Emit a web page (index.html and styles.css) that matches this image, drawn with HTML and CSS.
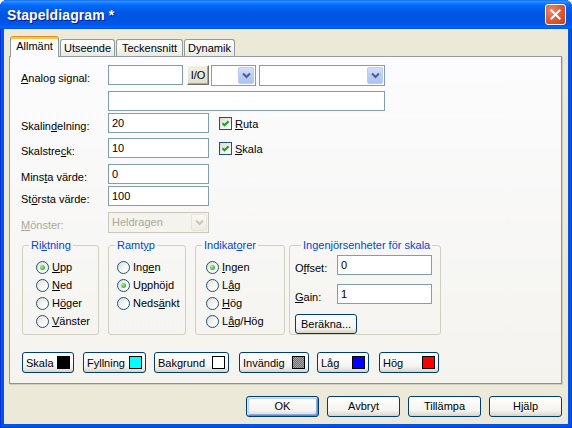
FILE: index.html
```html
<!DOCTYPE html>
<html lang="sv">
<head>
<meta charset="utf-8">
<title>Stapeldiagram</title>
<link rel="stylesheet" href="styles.css">
</head>
<body>
<div class="window">
  <header class="titlebar">
    <span class="title">Stapeldiagram *</span>
    <span class="close"><svg width="11" height="11" viewBox="0 0 11 11"><path d="M1.5 1.5L9.5 9.5M9.5 1.5L1.5 9.5" stroke="#fff" stroke-width="2" stroke-linecap="square"/></svg></span>
  </header>
  <div class="client">
    <div class="tabs">
      <span class="tab active t-allm">Allmänt</span>
      <span class="tab t-uts">Utseende</span>
      <span class="tab t-teck">Teckensnitt</span>
      <span class="tab t-dyn">Dynamik</span>
    </div>
    <div class="panel">
      <div class="form">
        <span class="lbl"><u>A</u>nalog signal:</span>
        <div class="fields">
          <span class="edit w-sig"></span>
          <span class="iobtn">I/O</span>
          <span class="combo w-c1"><span class="txt"></span><span class="drop"><svg width="9" height="7" viewBox="0 0 9 7"><path d="M1 1.5L4.5 5L8 1.5" fill="none" stroke="#4D6185" stroke-width="2"/></svg></span></span>
          <span class="combo w-c2"><span class="txt"></span><span class="drop"><svg width="9" height="7" viewBox="0 0 9 7"><path d="M1 1.5L4.5 5L8 1.5" fill="none" stroke="#4D6185" stroke-width="2"/></svg></span></span>
        </div>
        <span class="lbl"></span>
        <div class="fields"><span class="edit w-long"></span></div>
        <span class="lbl">Skalin<u>d</u>elning:</span>
        <div class="fields">
          <span class="edit w-num">20</span>
          <span class="chk"><span class="box"><svg width="9" height="9" viewBox="0 0 9 9"><path d="M1.5 4.2L3.6 6.3L7.6 2.3" fill="none" stroke="#21A121" stroke-width="2"/></svg></span><span><u>R</u>uta</span></span>
        </div>
        <span class="lbl">Skalstre<u>c</u>k:</span>
        <div class="fields">
          <span class="edit w-num">10</span>
          <span class="chk"><span class="box"><svg width="9" height="9" viewBox="0 0 9 9"><path d="M1.5 4.2L3.6 6.3L7.6 2.3" fill="none" stroke="#21A121" stroke-width="2"/></svg></span><span><u>S</u>kala</span></span>
        </div>
        <span class="lbl">Mins<u>t</u>a värde:</span>
        <div class="fields"><span class="edit w-num">0</span></div>
        <span class="lbl">St<u>ö</u>rsta värde:</span>
        <div class="fields"><span class="edit w-num">100</span></div>
        <span class="lbl disabled"><u>M</u>önster:</span>
        <div class="fields">
          <span class="combo w-num disabled"><span class="txt">Heldragen</span><span class="drop"><svg width="9" height="7" viewBox="0 0 9 7"><path d="M1 1.5L4.5 5L8 1.5" fill="none" stroke="#C9C7BA" stroke-width="2"/></svg></span></span>
        </div>
      </div>

      <div class="groups">
        <fieldset class="grp g-dir">
          <legend>Ri<u>k</u>tning</legend>
          <div class="opts">
            <div class="radio"><span class="dot on"></span><span><u>U</u>pp</span></div>
            <div class="radio"><span class="dot"></span><span><u>N</u>ed</span></div>
            <div class="radio"><span class="dot"></span><span>H<u>ö</u>ger</span></div>
            <div class="radio"><span class="dot"></span><span><u>V</u>änster</span></div>
          </div>
        </fieldset>
        <fieldset class="grp g-frame">
          <legend>Ramt<u>y</u>p</legend>
          <div class="opts">
            <div class="radio"><span class="dot"></span><span>Ing<u>e</u>n</span></div>
            <div class="radio"><span class="dot on"></span><span>U<u>p</u>phöjd</span></div>
            <div class="radio"><span class="dot"></span><span>Neds<u>ä</u>nkt</span></div>
          </div>
        </fieldset>
        <fieldset class="grp g-ind">
          <legend>Indikat<u>o</u>rer</legend>
          <div class="opts">
            <div class="radio"><span class="dot on"></span><span><u>I</u>ngen</span></div>
            <div class="radio"><span class="dot"></span><span>L<u>å</u>g</span></div>
            <div class="radio"><span class="dot"></span><span><u>H</u>ög</span></div>
            <div class="radio"><span class="dot"></span><span>L<u>å</u>g/Hög</span></div>
          </div>
        </fieldset>
        <fieldset class="grp g-eng">
          <legend>Ingenjörsenheter för skala</legend>
          <div class="eng">
            <span class="elbl">O<u>f</u>fset:</span><span class="edit w-eng">0</span>
            <span class="elbl"><u>G</u>ain:</span><span class="edit w-eng">1</span>
          </div>
          <span class="btn calc">Beräkna...</span>
        </fieldset>
      </div>

      <div class="colors">
        <span class="cbtn c-skala">Skala<span class="sw sw-black"></span></span>
        <span class="cbtn c-fyll">Fyllning<span class="sw sw-cyan"></span></span>
        <span class="cbtn c-bak">Bakgrund<span class="sw sw-white"></span></span>
        <span class="cbtn c-inv">Invändig<span class="sw sw-gray"></span></span>
        <span class="cbtn c-lag">Låg<span class="sw sw-blue"></span></span>
        <span class="cbtn c-hog">Hög<span class="sw sw-red"></span></span>
      </div>
    </div>

    <div class="actions">
      <span class="btn act default">OK</span>
      <span class="btn act">Avbryt</span>
      <span class="btn act">Tillämpa</span>
      <span class="btn act">Hjälp</span>
    </div>
  </div>
</div>
</body>
</html>
```

FILE: styles.css
```css
* { box-sizing: border-box; }
html, body { margin: 0; padding: 0; }
body {
  width: 572px;
  height: 428px;
  overflow: hidden;
  background: #ffffff;
  font-family: "Liberation Sans", Arial, sans-serif;
  font-size: 11px;
  color: #000;
}
u { text-decoration: underline; text-underline-offset: 1px; }

.window {
  width: 572px;
  height: 428px;
  display: flex;
  flex-direction: column;
  background: #0055E5;
  border-radius: 7px 7px 0 0;
  box-shadow: inset 1px 0 #0831D9, inset -1px 0 #0831D9, inset 0 -1px #0831D9;
  overflow: hidden;
}

.titlebar {
  height: 29px;
  flex: none;
  display: flex;
  align-items: center;
  padding: 0 6px 0 7px;
  background: linear-gradient(to bottom, #0058EE 0px, #3A93FF 1px, #288EFF 2px, #127DFF 3px, #0369FC 5px, #0262EE 8px, #0057E5 13px, #0054E3 20px, #0055EB 24px, #005BF5 26px, #026AFE 27px, #0062EF 28px, #0043CF 29px);
}
.title {
  flex: 1;
  color: #fff;
  font-weight: bold;
  font-size: 14px;
  letter-spacing: 0.1px;
  text-shadow: 1px 1px #0A1883;
  padding-top: 1px;
}
.close {
  width: 21px;
  height: 21px;
  border: 1px solid #fff;
  border-radius: 3px;
  background: radial-gradient(circle at 30% 30%, #F08A6C 0%, #E25D3B 45%, #C8401E 100%);
  display: flex;
  align-items: center;
  justify-content: center;
}

.client {
  flex: 1;
  margin: 0 4px 4px;
  background: #ECE9D8;
  padding: 7px 6px 0 5px;
  display: flex;
  flex-direction: column;
}

/* tabs */
.tabs {
  display: flex;
  align-items: flex-end;
  height: 20px;
  margin-left: 1px;
}
.tab {
  height: 17px;
  line-height: 16px;
  text-align: center;
  border: 1px solid #919B9C;
  border-bottom: none;
  border-radius: 3px 3px 0 0;
  background: linear-gradient(#FFFFFF, #F6F6F3 50%, #E9E8E1);
  margin-right: 1px;
}
.tab.active {
  position: relative;
  z-index: 1;
  height: 21px;
  line-height: 19px;
  margin-bottom: -1px;
  border-top: 1px solid #E68B2C;
  box-shadow: inset 0 2px #FFC83C;
  background: #FCFCFE;
}
.t-allm { width: 49px; }
.t-uts { width: 55px; }
.t-teck { width: 67px; }
.t-dyn { width: 51px; }

.panel {
  width: 553px;
  height: 328px;
  border: 1px solid #919B9C;
  border-right-color: #8C9394;
  border-bottom-color: #8C9394;
  background: linear-gradient(#FCFCFE, #F4F3EE);
  padding-top: 8px;
  box-shadow: 1px 1px 0 #D0CEBF;
}

/* form grid */
.form {
  display: grid;
  grid-template-columns: 87px auto;
  grid-template-rows: 26px 22px 25px 26px 22px 26px 20px;
  margin-left: 11px;
}
.lbl {
  line-height: 20px;
  padding-top: 3px;
  white-space: nowrap;
}
.lbl.disabled { color: #ACA899; }
.fields {
  display: flex;
  align-items: flex-start;
}
.edit {
  display: block;
  height: 20px;
  border: 1px solid #7F9DB9;
  background: #fff;
  padding: 0 3px;
  line-height: 18px;
}
.w-sig { width: 75px; }
.w-long { width: 277px; }
.w-num { width: 101px; }
.w-eng { width: 95px; }

.iobtn {
  width: 22px;
  height: 20px;
  margin-left: 4px;
  line-height: 18px;
  text-align: center;
  background: linear-gradient(#F2EFE4, #E3DECB);
  border: 1px solid;
  border-color: #FFFFFF #716F64 #716F64 #FFFFFF;
  box-shadow: 0 0 0 0 transparent, inset -1px -1px #ACA899;
}
.combo {
  display: flex;
  height: 21px;
  border: 1px solid #7F9DB9;
  background: #fff;
  padding: 1px;
}
.combo .txt {
  flex: 1;
  padding-left: 2px;
  line-height: 17px;
}
.w-c1 { width: 45px; margin-left: 2px; }
.w-c2 { width: 126px; margin-left: 3px; }
.drop {
  width: 16px;
  height: 17px;
  border: 1px solid #B9CCF6;
  border-radius: 2px;
  background: linear-gradient(#D3E0FD, #B7CAF6 60%, #AEC3F4);
  display: flex;
  align-items: center;
  justify-content: center;
}
.combo.disabled {
  border-color: #C9C7BA;
  background: #F4F3EE;
  color: #ACA899;
}
.combo.disabled .drop {
  border-color: #E8E6DA;
  background: linear-gradient(#F8F7F3, #EEEDE5);
}

.chk {
  display: flex;
  align-items: center;
  gap: 3px;
  height: 20px;
  margin-left: 10px;
  padding-top: 1px;
}
.box {
  width: 13px;
  height: 13px;
  border: 1px solid #1C5180;
  background: linear-gradient(135deg, #DCDCD7, #FFFFFF);
  display: flex;
  align-items: center;
  justify-content: center;
}

/* groups */
.groups {
  display: flex;
  margin: 7px 0 0 12px;
}
.grp {
  margin: 0;
  padding: 0;
  height: 96px;
  min-width: 0;
  border: 1px solid #D0D0BF;
  border-radius: 3px;
}
.grp legend {
  margin-left: 6px;
  padding: 0 2px;
  line-height: 13px;
  color: #0046D5;
  white-space: nowrap;
}
.g-dir { width: 77px; }
.g-frame { width: 78px; margin-left: 9px; }
.g-ind { width: 90px; margin-left: 9px; }
.g-eng { width: 152px; margin-left: 4px; padding: 3px 0 0 5px; }

.opts { padding-top: 6px; }
.g-dir .opts { padding-left: 13px; }
.g-frame .opts { padding-left: 8px; }
.g-ind .opts { padding-left: 10px; }
.radio {
  display: flex;
  align-items: center;
  gap: 3px;
  height: 18px;
}
.dot {
  width: 13px;
  height: 13px;
  border-radius: 50%;
  border: 1px solid #1C5180;
  background: linear-gradient(135deg, #DCDCD7, #FFFFFF 75%);
  display: flex;
  align-items: center;
  justify-content: center;
}
.dot.on::after {
  content: "";
  width: 5px;
  height: 5px;
  border-radius: 50%;
  background: radial-gradient(circle at 35% 35%, #A8EB9A, #4BC13F 60%, #21A121);
}

.eng {
  display: grid;
  grid-template-columns: 42px 95px;
  row-gap: 6px;
}
.elbl {
  line-height: 20px;
  padding-top: 3px;
}

.btn {
  display: block;
  border: 1px solid #003C74;
  border-radius: 3px;
  background: linear-gradient(#FFFFFF, #F5F4F0 70%, #E3E0D6 90%, #D6D0C5);
  text-align: center;
}
.calc {
  width: 62px;
  height: 20px;
  line-height: 18px;
  margin-top: 7px;
}

/* colour buttons */
.colors {
  display: flex;
  margin: 17px 0 0 12px;
}
.cbtn {
  display: flex;
  align-items: center;
  justify-content: space-between;
  height: 21px;
  padding: 0 3px 0 3px;
  border: 1px solid #003C74;
  border-radius: 3px;
  background: linear-gradient(#FFFFFF, #F5F4F0 70%, #E3E0D6 90%, #D6D0C5);
}
.c-skala { width: 52px; }
.c-fyll { width: 63px; margin-left: 9px; }
.c-bak { width: 75px; margin-left: 8px; }
.c-inv { width: 70px; margin-left: 10px; }
.c-lag { width: 52px; margin-left: 8px; }
.c-hog { width: 60px; margin-left: 10px; }
.sw {
  width: 13px;
  height: 13px;
  border: 1px solid #000;
}
.sw-black { background: #000; }
.sw-cyan { background: #00FFFF; }
.sw-white { background: #FFFFFF; }
.sw-gray { background: repeating-conic-gradient(#6E6E6E 0 25%, #A8A8A8 0 50%) 0 0 / 2px 2px; }
.sw-blue { background: #0000FF; }
.sw-red { background: #FF0000; }

/* dialog buttons */
.actions {
  display: flex;
  justify-content: flex-end;
  gap: 8px;
  margin-top: 12px;
}
.act {
  width: 73px;
  height: 21px;
  line-height: 19px;
}
.act.default {
  box-shadow: inset 1px 1px #CEE7FF, inset -1px -1px #6982EE, inset 2px 2px #BCD4F6, inset -2px -2px #89ADE4;
}
```
